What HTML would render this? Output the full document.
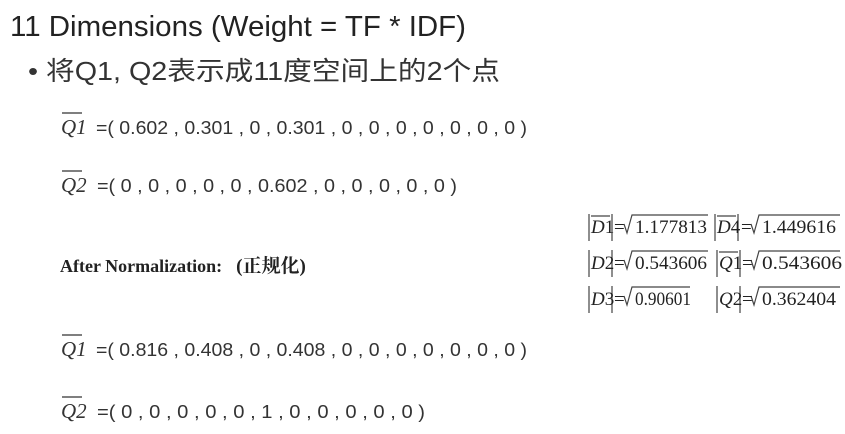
<!DOCTYPE html>
<html><head><meta charset="utf-8"><style>
body{margin:0;width:845px;height:434px;background:#fff;overflow:hidden;position:relative}
</style></head><body>
<svg width="845" height="434" style="position:absolute;left:0;top:0" xmlns="http://www.w3.org/2000/svg">
<text x="10" y="36" font-family="Liberation Sans, DejaVu Sans, sans-serif" font-size="29" fill="#222" textLength="456" lengthAdjust="spacingAndGlyphs">11 Dimensions (Weight = TF * IDF)</text>
<text x="28" y="80" font-family="Liberation Sans, Noto Sans CJK SC, sans-serif" font-size="26" fill="#333" textLength="472" lengthAdjust="spacingAndGlyphs">• 将Q1, Q2表示成11度空间上的2个点</text>
<g font-family="Liberation Sans, DejaVu Sans, sans-serif" font-size="18" fill="#333">
<g font-family="Liberation Serif, serif" font-style="italic" font-size="21">
<text x="61" y="134">Q1</text><text x="61" y="192">Q2</text>
<text x="61" y="356">Q1</text><text x="61" y="418">Q2</text></g>
<path d="M62 113H82M62 171H82M62 335H82M62 397H82" stroke="#333" stroke-width="1.3"/>
<text x="96" y="134" textLength="431" lengthAdjust="spacingAndGlyphs">=( 0.602 , 0.301 , 0 , 0.301 , 0 , 0 , 0 , 0 , 0 , 0 , 0 )</text>
<text x="97" y="192" textLength="360" lengthAdjust="spacingAndGlyphs">=( 0 , 0 , 0 , 0 , 0 , 0.602 , 0 , 0 , 0 , 0 , 0 )</text>
<text x="96" y="356" textLength="431" lengthAdjust="spacingAndGlyphs">=( 0.816 , 0.408 , 0 , 0.408 , 0 , 0 , 0 , 0 , 0 , 0 , 0 )</text>
<text x="97" y="418" textLength="328" lengthAdjust="spacingAndGlyphs">=( 0 , 0 , 0 , 0 , 0 , 1 , 0 , 0 , 0 , 0 , 0 )</text>
</g>
<text x="60" y="272" font-family="Liberation Serif, Noto Serif CJK SC, serif" font-weight="bold" font-size="18" fill="#222">After Normalization:<tspan dx="14" font-size="19">(正规化)</tspan></text>
<g font-family="Liberation Serif, serif" font-size="19" fill="#222">
<g stroke="#444" stroke-width="1.2" fill="none">
<path d="M589 214V241M612 214V241M591 216H610M715 214V241M738 214V241M717 216H736"/>
<path d="M589 250V277M612 250V277M717 250V277M740 250V277M719 252H738"/>
<path d="M589 286V313M612 286V313M717 286V313M740 286V313"/>
<path d="M624 224l3 9l5-18H708M751 224l3 9l5-18H840M624 260l3 9l5-18H708M751 260l3 9l5-18H840M624 296l3 9l5-18H690M751 296l3 9l5-18H840"/>
</g>
<text x="591" y="233" font-style="italic">D<tspan font-style="normal">1</tspan></text><text x="614" y="233">=</text><text x="635" y="233" textLength="72" lengthAdjust="spacingAndGlyphs">1.177813</text>
<text x="717" y="233" font-style="italic">D<tspan font-style="normal">4</tspan></text><text x="741" y="233">=</text><text x="762" y="233" textLength="74" lengthAdjust="spacingAndGlyphs">1.449616</text>
<text x="591" y="269" font-style="italic">D<tspan font-style="normal">2</tspan></text><text x="614" y="269">=</text><text x="635" y="269" textLength="72" lengthAdjust="spacingAndGlyphs">0.543606</text>
<text x="719" y="269" font-style="italic">Q<tspan font-style="normal">1</tspan></text><text x="742" y="269">=</text><text x="762" y="269" textLength="80" lengthAdjust="spacingAndGlyphs">0.543606</text>
<text x="591" y="305" font-style="italic">D<tspan font-style="normal">3</tspan></text><text x="614" y="305">=</text><text x="635" y="305" textLength="56" lengthAdjust="spacingAndGlyphs">0.90601</text>
<text x="719" y="305" font-style="italic">Q<tspan font-style="normal">2</tspan></text><text x="742" y="305">=</text><text x="762" y="305" textLength="74" lengthAdjust="spacingAndGlyphs">0.362404</text>
</g>
</svg>
</body></html>
